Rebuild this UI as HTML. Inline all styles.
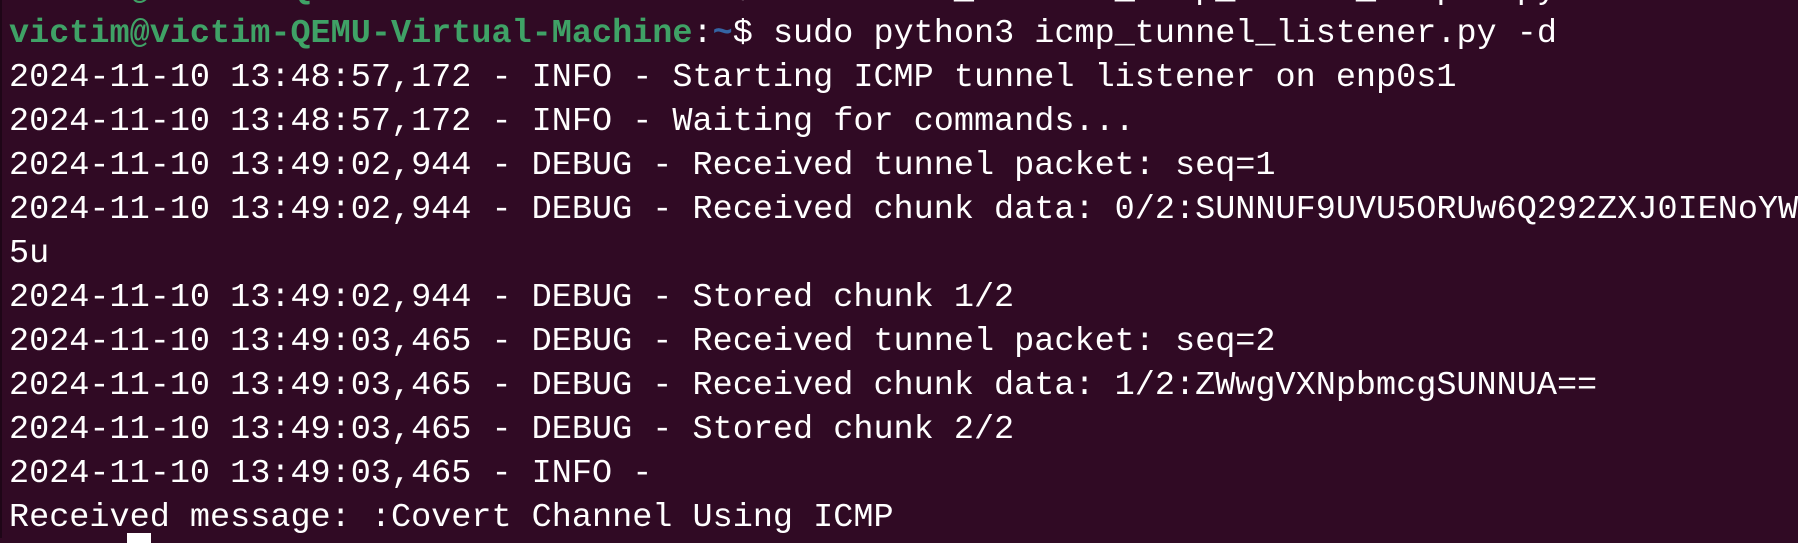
<!DOCTYPE html>
<html><head><meta charset="utf-8"><style>
html,body{margin:0;padding:0;}
body{width:1798px;height:538px;background:#300a24;overflow:hidden;position:relative;}
pre{position:absolute;left:9px;top:-32px;margin:0;font-family:"Liberation Mono",monospace;font-size:33.5px;line-height:44px;color:#ffffff;white-space:pre;}
.g{color:#3fa266;font-weight:bold;}
.b{color:#3465a4;font-weight:bold;}
#cur{position:absolute;left:127px;top:533px;width:24px;height:10px;background:#fff;}
#edge{position:absolute;left:0;top:0;width:2px;height:538px;background:#1e0617;}
</style></head><body>
<div id="edge"></div>
<pre><span class="g">victim@victim-QEMU-Virtual-Machine</span>:<span class="b">~</span>$ cd covert_channel_icmp_tunnel_sample.py
<span class="g">victim@victim-QEMU-Virtual-Machine</span>:<span class="b">~</span>$ sudo python3 icmp_tunnel_listener.py -d
2024-11-10 13:48:57,172 - INFO - Starting ICMP tunnel listener on enp0s1
2024-11-10 13:48:57,172 - INFO - Waiting for commands...
2024-11-10 13:49:02,944 - DEBUG - Received tunnel packet: seq=1
2024-11-10 13:49:02,944 - DEBUG - Received chunk data: 0/2:SUNNUF9UVU5ORUw6Q292ZXJ0IENoYW
5u
2024-11-10 13:49:02,944 - DEBUG - Stored chunk 1/2
2024-11-10 13:49:03,465 - DEBUG - Received tunnel packet: seq=2
2024-11-10 13:49:03,465 - DEBUG - Received chunk data: 1/2:ZWwgVXNpbmcgSUNNUA==
2024-11-10 13:49:03,465 - DEBUG - Stored chunk 2/2
2024-11-10 13:49:03,465 - INFO - 
Received message: :Covert Channel Using ICMP</pre>
<div id="cur"></div>
</body></html>
